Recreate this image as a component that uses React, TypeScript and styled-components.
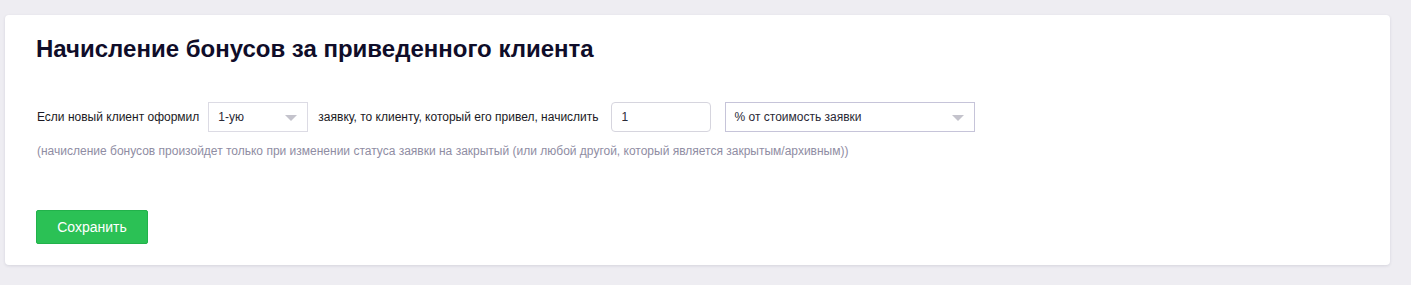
import React from 'react';
import styled, { createGlobalStyle } from 'styled-components';

const GlobalStyle = createGlobalStyle`
  html, body {
    margin: 0;
    padding: 0;
    background: #eeedf2;
    font-family: "Liberation Sans", Arial, sans-serif;
  }
`;

const Page = styled.div`
  padding: 15px 21px 20px 5px;
`;

const Card = styled.section`
  background: #fff;
  border-radius: 4px;
  box-shadow: 0 1px 3px rgba(40, 38, 70, 0.12);
  padding: 20px 31px 21px 31px;
`;

const Title = styled.h2`
  margin: 0;
  font-size: 24px;
  line-height: 28px;
  font-weight: 700;
  color: #0f0d29;
`;

const Row = styled.div`
  display: flex;
  align-items: center;
  margin-top: 39px;
`;

const Label = styled.span<{ $gap?: number }>`
  font-size: 12px;
  color: #1b1a24;
  margin-right: ${p => p.$gap ?? 12}px;
  margin-left: 1px;
`;

const SelectBox = styled.div<{ $width: number; $strong?: boolean }>`
  box-sizing: border-box;
  width: ${p => p.$width}px;
  height: 30px;
  border: 1px solid ${p => (p.$strong ? '#c6c4d9' : '#dcdbe4')};
  display: flex;
  align-items: center;
  justify-content: space-between;
  padding: 0 10px 0 9px;
  font-size: 12px;
  color: #2a2936;
  margin-right: ${p => (p.$strong ? 0 : 9)}px;
`;

const Arrow = styled.span`
  width: 0;
  height: 0;
  border-left: 6px solid transparent;
  border-right: 6px solid transparent;
  border-top: 6px solid #c4c3cc;
  margin-top: 1px;
`;

const Input = styled.input`
  box-sizing: border-box;
  width: 100px;
  height: 30px;
  border: 1px solid #d6d5de;
  border-radius: 4px;
  padding: 0 10px;
  font-family: inherit;
  font-size: 12px;
  color: #2a2936;
  margin-right: 14px;
  outline: none;
`;

const Hint = styled.p`
  margin: 12px 0 0 1px;
  font-size: 12px;
  line-height: 14px;
  color: #8f8da3;
`;

const SaveButton = styled.button`
  margin-top: 52px;
  width: 112px;
  height: 34px;
  background: #2bc155;
  border: 1px solid #22b24b;
  border-radius: 2px;
  color: #fff;
  font-family: inherit;
  font-size: 14px;
  cursor: pointer;
`;

const App: React.FC = () => {
  return (
    <>
      <GlobalStyle />
      <Page>
        <Card>
          <Title>Начисление бонусов за приведенного клиента</Title>
          <Row>
            <Label $gap={9}>Если новый клиент оформил</Label>
            <SelectBox $width={100}>
              1-ую
              <Arrow />
            </SelectBox>
            <Label $gap={12}>заявку, то клиенту, который его привел, начислить</Label>
            <Input defaultValue="1" />
            <SelectBox $width={250} $strong>
              % от стоимость заявки
              <Arrow />
            </SelectBox>
          </Row>
          <Hint>
            (начисление бонусов произойдет только при изменении статуса заявки на закрытый (или любой другой, который является закрытым/архивным))
          </Hint>
          <SaveButton>Сохранить</SaveButton>
        </Card>
      </Page>
    </>
  );
};

export default App;
